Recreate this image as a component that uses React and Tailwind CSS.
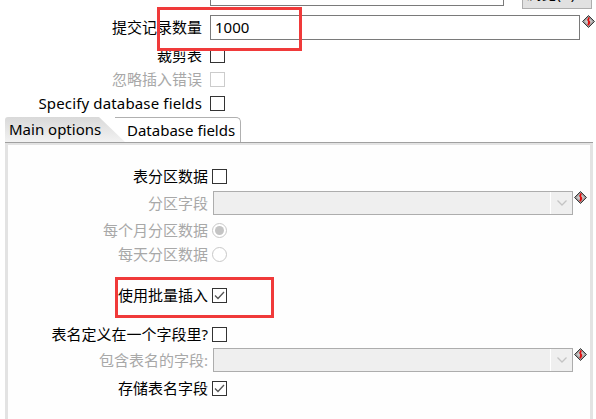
import React from 'react';

const cjk = '[font-family:"Noto_Sans","Noto_Sans_CJK_SC",sans-serif]';

const Diamond = () => (
  <svg width="13" height="13" viewBox="0 0 13 13" className="shrink-0">
    <path d="M6.5 0.5 L12.5 6.5 L6.5 12.5 L0.5 6.5 Z" fill="#9a9a9a" stroke="#3a3a3a" strokeWidth="1" />
    <path d="M6.5 2.5 L10.5 6.5 L6.5 10.5 L2.5 6.5 Z" fill="#c8c8c8" />
    <path d="M7.6 3.2 C5.6 3.2 5.4 5.6 6.8 6.2 C8.2 6.8 7.8 9.4 5.4 9.4 M6.6 2.4 V10.4" fill="none" stroke="#e01010" strokeWidth="1.4" />
  </svg>
);

const Check = ({ checked, disabled }) => (
  <div className={`w-[15px] h-[15px] border flex items-center justify-center bg-white ${disabled ? 'border-[#cccccc]' : 'border-[#333333]'}`}>
    {checked && (
      <svg width="11" height="9" viewBox="0 0 11 9">
        <path d="M1 4.5 L4 7.5 L10 1" fill="none" stroke="#555555" strokeWidth="1.3" />
      </svg>
    )}
  </div>
);

const Radio = ({ on }) => (
  <div className="w-[15px] h-[15px] rounded-full border border-[#c8c8c8] bg-white flex items-center justify-center">
    {on && <div className="w-[9px] h-[9px] rounded-full bg-[#c4c4c4]" />}
  </div>
);

const Combo = () => (
  <div className="flex-1 h-[24px] border border-[#adadad] bg-[#efefef] flex justify-end">
    <div className="w-[22px] h-full border-l border-white flex items-center justify-center">
      <svg width="10" height="6" viewBox="0 0 10 6">
        <path d="M0.5 0.5 L5 5 L9.5 0.5" fill="none" stroke="#c4c4c4" strokeWidth="1.3" />
      </svg>
    </div>
  </div>
);

const TopRow = ({ label, disabled, className, children }) => (
  <div className={`flex items-center h-[24px] ${className || ''}`}>
    <div className={`w-[202px] text-right text-[15px] leading-none whitespace-nowrap ${disabled ? 'text-[#a8a8a8]' : 'text-black'}`}>{label}</div>
    <div className="ml-[8px] flex items-center flex-1">{children}</div>
  </div>
);

const PanelRow = ({ label, disabled, className, children }) => (
  <div className={`flex items-center h-[24px] ${className || ''}`}>
    <div className={`w-[200px] text-right text-[15px] leading-none whitespace-nowrap ${disabled ? 'text-[#a8a8a8]' : 'text-black'}`}>{label}</div>
    <div className="ml-[4px] flex items-center flex-1">{children}</div>
  </div>
);

export default function App() {
  return (
    <div className={`w-[596px] h-[419px] bg-white overflow-hidden relative ${cjk}`}>
      <div className="flex items-start mt-[-19px] h-[28px]">
        <div className="ml-[210px] w-[294px] h-[25px] border border-[#7a7a7a] bg-white text-[15px] pl-[40px] leading-[36px]">_</div>
        <div className="ml-[18px] w-[70px] h-[28px] border border-[#adadad] bg-[#e1e1e1] text-[15px] text-black text-center leading-[22px]">浏览(B)...</div>
      </div>

      <TopRow label="提交记录数量" className="mt-[6px] h-[25px]">
        <div className="flex-1 h-[25px] border border-[#7a7a7a] bg-white text-[15px] text-black px-[4px] flex items-center">1000</div>
        <div className="ml-[2px] w-[14px] self-start"><Diamond /></div>
      </TopRow>
      <TopRow label="裁剪表" className="mt-[3px]"><Check /></TopRow>
      <TopRow label="忽略插入错误" disabled><Check disabled /></TopRow>
      <TopRow label="Specify database fields" className="tracking-[0.15px]"><Check /></TopRow>

      <div className="mt-[2px] h-[25px] flex items-end ml-[5px] text-[15px] text-black">
        <div className="w-[120px] h-[25px] bg-gradient-to-b from-[#d9d9d9] to-[#f2f2f2] rounded-tl-[3px] pl-[4px] flex items-center [clip-path:polygon(0_0,94px_0,100%_100%,0_100%)]">Main options</div>
        <div className="ml-[-10px] h-[25px] pl-[12px] pr-[5px] border-t border-r border-[#b0b0b0] rounded-tr-[5px] flex items-center">Database fields</div>
        <div className="flex-1" />
      </div>

      <div className="ml-[5px] w-[588px] h-[300px] border-t border-[#a0a0a0]">
        <div className="h-full border-t-[2px] border-l-[3px] border-r-[3px] border-[#e3e3e3] bg-[#fefefe]">
          <PanelRow label="表分区数据" className="mt-[19px]"><Check /></PanelRow>
          <PanelRow label="分区字段" disabled className="mt-[3px]">
            <div className="ml-[1px] flex flex-1 items-start">
              <Combo />
              <div className="ml-[1px] mr-[3px] self-start"><Diamond /></div>
            </div>
          </PanelRow>
          <PanelRow label="每个月分区数据" disabled className="mt-[3px]"><Radio on /></PanelRow>
          <PanelRow label="每天分区数据" disabled><Radio /></PanelRow>
          <PanelRow label="使用批量插入" className="mt-[17px]"><Check checked /></PanelRow>
          <PanelRow label="表名定义在一个字段里?" className="mt-[15px]"><Check /></PanelRow>
          <PanelRow label="包含表名的字段:" disabled className="mt-[2px]">
            <div className="ml-[1px] flex flex-1 items-start">
              <Combo />
              <div className="ml-[1px] mr-[3px] self-start"><Diamond /></div>
            </div>
          </PanelRow>
          <PanelRow label="存储表名字段" className="mt-[4px]"><Check checked /></PanelRow>
        </div>
      </div>

      <div className="absolute left-[157px] top-[7px] w-[145px] h-[44px] border-[3px] border-[#f03a3a]" />
      <div className="absolute left-[115px] top-[277px] w-[159px] h-[41px] border-[3px] border-[#f03a3a]" />
    </div>
  );
}
